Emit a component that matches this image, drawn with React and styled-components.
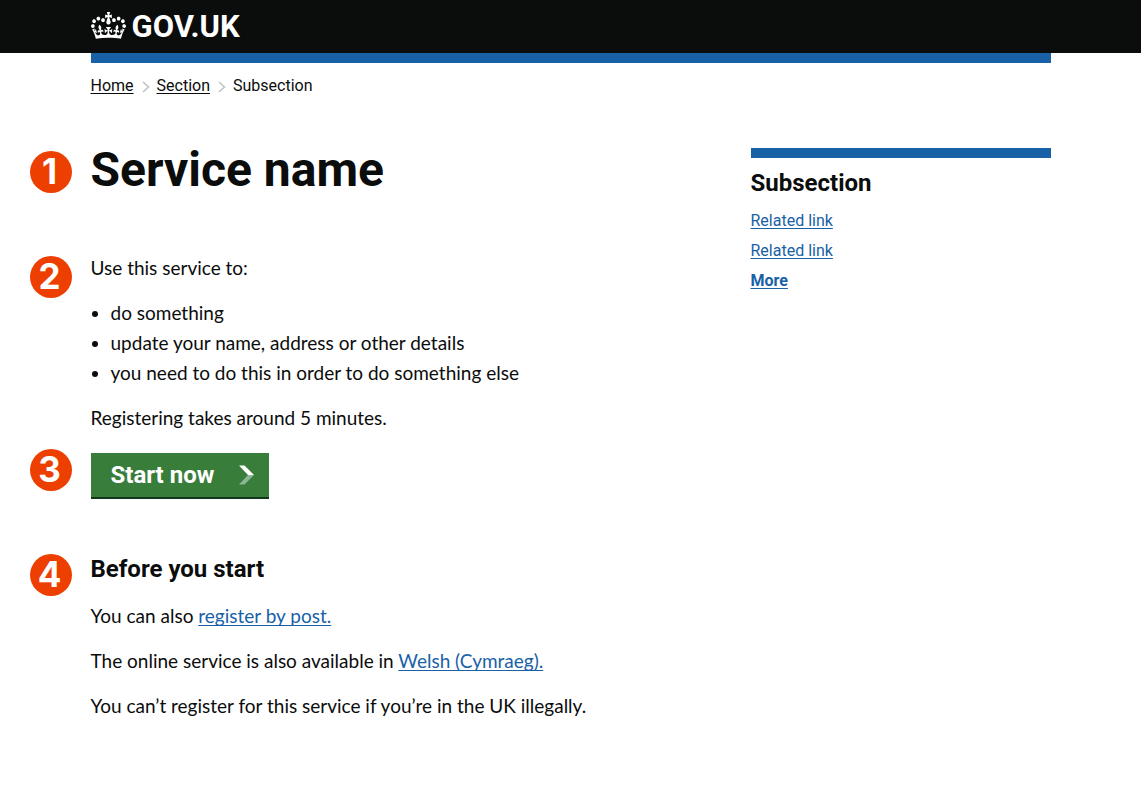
import React from "react";
import styled, { createGlobalStyle } from "styled-components";

const GlobalStyle = createGlobalStyle`
  *, *::before, *::after { box-sizing: border-box; }
  body {
    margin: 0;
    background: #fff;
    color: #0b0c0c;
    font-family: Lato, "Liberation Sans", sans-serif;
    font-size: 19px;
    line-height: 30px;
  }
  h1, h2, p, ul, ol { margin: 0; padding: 0; }
`;

const Wrap = styled.div`
  max-width: 960px;
  margin: 0 auto;
`;

const Header = styled.header`
  background: #0b0c0c;
`;

const HeaderInner = styled(Wrap)`
  height: 53px;
  display: flex;
  align-items: center;
`;

const Logo = styled.a`
  display: flex;
  align-items: center;
  gap: 6px;
  color: #fff;
  font-family: Roboto, sans-serif;
  font-size: 31px;
  font-weight: 700;
  text-decoration: none;

  svg {
    margin-bottom: 2px;
  }
`;

const Bar = styled.div`
  height: 10px;
  background: #1861a6;
`;

const Breadcrumbs = styled.ol`
  display: flex;
  align-items: center;
  padding-top: 13px;
  list-style: none;
  font-family: Roboto, sans-serif;
  font-size: 16px;
  line-height: 20px;
`;

const Crumb = styled.li`
  display: flex;
  align-items: center;
`;

const Separator = styled.svg`
  margin: 2px 7px 0 8px;
`;

const Link = styled.a`
  color: ${(p) => (p.$plain ? "#0b0c0c" : "#1861a6")};
  font-weight: ${(p) => (p.$bold ? 700 : 400)};
  text-underline-offset: 2px;
  text-decoration-thickness: 1px;
  text-decoration-skip-ink: none;
`;

const Columns = styled(Wrap)`
  display: grid;
  grid-template-columns: minmax(0, 1fr) 300px;
  gap: 30px;
  padding: 52px 0 60px;
`;

const Step = styled.section`
  display: grid;
  grid-template-columns: 42px minmax(0, 1fr);
  column-gap: 19px;
  align-items: start;
  margin-left: -61px;
  margin-top: ${(p) => p.$space}px;
`;

const Badge = styled.span`
  width: 42px;
  height: 42px;
  padding-right: 2px;
  border-radius: 50%;
  background: #ed3f00;
  color: #fff;
  font: bold 35px/40px Inter, "Liberation Sans", sans-serif;
  text-align: center;
`;

const Title = styled.h1`
  font-family: Roboto, sans-serif;
  font-size: 48px;
  line-height: 38px;
  font-weight: 700;
`;

const Heading = styled.h2`
  font-family: Roboto, sans-serif;
  font-size: 24px;
  line-height: 30px;
  font-weight: 700;
`;

const Copy = styled.div`
  display: grid;
  gap: 15px;
  margin-top: ${(p) => p.$top || 0}px;
`;

const Bullets = styled.ul`
  padding-left: 20px;
`;

const StartButton = styled.button`
  display: flex;
  align-items: center;
  gap: 24px;
  justify-self: start;
  height: 46px;
  margin-top: 4px;
  padding: 0 14px 0 20px;
  border: 0;
  border-bottom: 2px solid #12371a;
  background: #397d3b;
  color: #fff;
  font: 700 24px/30px Roboto, sans-serif;
`;

const Related = styled.aside`
  display: grid;
  align-content: start;
`;

const RelatedHeading = styled(Heading)`
  margin: 10px 0 8px;
`;

const RelatedLinks = styled.ul`
  list-style: none;
  font-family: Roboto, sans-serif;
  font-size: 16px;
`;

const Crown = () => (
  <svg width="35" height="27" viewBox="0 0 132 97" preserveAspectRatio="none" fill="#fff" aria-hidden="true">
    <path d="M25 30.2c3.5 1.5 7.7-.2 9.1-3.7 1.5-3.6-.2-7.8-3.9-9.2-3.6-1.4-7.6.3-9.1 3.9-1.4 3.5.3 7.5 3.9 9zM9 39.5c3.6 1.5 7.8-.2 9.2-3.7 1.5-3.6-.2-7.8-3.9-9.1-3.6-1.5-7.6.2-9.1 3.8-1.4 3.5.3 7.5 3.8 9zM4.4 57.2c3.5 1.5 7.7-.2 9.1-3.8 1.5-3.6-.2-7.7-3.9-9.1-3.5-1.5-7.6.3-9.1 3.8-1.4 3.5.3 7.6 3.9 9.1zm38.3-21.4c3.5 1.5 7.7-.2 9.1-3.8 1.5-3.6-.2-7.7-3.9-9.1-3.6-1.5-7.6.3-9.1 3.8-1.3 3.6.4 7.7 3.9 9.1zm64.4-5.6c-3.6 1.5-7.8-.2-9.1-3.7-1.5-3.6.2-7.8 3.8-9.2 3.6-1.4 7.7.3 9.2 3.9 1.3 3.5-.4 7.5-3.9 9zm15.9 9.3c-3.6 1.5-7.7-.2-9.1-3.7-1.5-3.6.2-7.8 3.7-9.1 3.6-1.5 7.7.2 9.2 3.8 1.5 3.5-.3 7.5-3.8 9zm4.7 17.7c-3.6 1.5-7.8-.2-9.2-3.8-1.5-3.6.2-7.7 3.9-9.1 3.6-1.5 7.7.3 9.2 3.8 1.3 3.5-.4 7.6-3.9 9.1zM89.3 35.8c-3.6 1.5-7.8-.2-9.2-3.8-1.4-3.6.2-7.7 3.9-9.1 3.6-1.5 7.7.3 9.2 3.8 1.4 3.6-.3 7.7-3.9 9.1zM69.7 17.7l8.9 4.7V9.3l-8.9 2.8c-.2-.3-.5-.6-.9-.9L72.4 0H59.6l3.5 11.2c-.3.3-.6.5-.9.9l-8.8-2.8v13.1l8.8-4.7c.3.3.6.7.9.9l-5 15.4v.1c-.2.8-.4 1.6-.4 2.4 0 4.1 3.1 7.5 7 8.1h.2c.3 0 .7.1 1 .1.4 0 .7 0 1-.1h.2c4-.6 7.1-4.1 7.1-8.1 0-.8-.1-1.7-.4-2.4V34l-5.1-15.4c.4-.2.7-.6 1-.9zM66 92.8c16.9 0 32.8 1.1 47.1 3.2 4-16.9 8.9-26.7 14-33.5l-9.6-3.4c1 4.9 1.1 7.2 0 10.2-1.5-1.4-3-4.3-4.2-8.7L108.6 76c2.8-2 5-3.2 7.5-3.3-4.4 9.4-10 11.9-13.6 11.2-4.3-.8-6.3-4.6-5.6-7.9 1-4.7 5.7-5.9 8-.5 4.3-8.7-3-11.4-7.6-8.8 7.1-7.2 7.9-13.5 2.1-21.1-8 6.1-8.1 12.3-4.5 20.8-4.7-5.4-12.1-2.5-9.5 6.2 3.4-5.2 7.9-2 7.2 3.1-.6 4.3-6.4 7.8-13.5 7.2-10.3-.9-10.9-8-11.2-13.8 2.5-.5 7.1 1.8 11 7.3L80.2 60c-4.1 4.4-8 5.3-12.3 5.4 1.4-4.4 8-11.6 8-11.6H55.5s6.4 7.2 7.9 11.6c-4.2-.1-8-1-12.3-5.4l1.4 16.4c3.9-5.5 8.5-7.7 10.9-7.3-.3 5.8-.9 12.8-11.1 13.8-7.2.6-12.9-2.9-13.5-7.2-.7-5 3.8-8.3 7.1-3.1 2.7-8.7-4.6-11.6-9.4-6.2 3.7-8.5 3.6-14.7-4.6-20.8-5.8 7.6-5 13.9 2.2 21.1-4.7-2.6-11.9.1-7.7 8.8 2.3-5.5 7.1-4.2 8.1.5.7 3.3-1.3 7.1-5.7 7.9-3.5.7-9-1.8-13.5-11.2 2.5.1 4.7 1.3 7.5 3.3l-4.7-15.4c-1.2 4.4-2.7 7.2-4.3 8.7-1.1-3-.9-5.3 0-10.2l-9.5 3.4c5 6.9 9.9 16.7 14 33.5 14.8-2.1 30.8-3.2 47.7-3.2z" />
  </svg>
);

const CrumbArrow = () => (
  <Separator width="8" height="12" viewBox="0 0 8 12" fill="none" stroke="#bfc1c3" strokeWidth="1.5" aria-hidden="true">
    <path d="M1 1l5.5 5L1 11" />
  </Separator>
);

const StartArrow = () => (
  <svg width="17" height="20" viewBox="0 0 17 20" aria-hidden="true">
    <path d="M1 .5h5.5L16 10h-6z" fill="#fff" />
    <path d="M10 10h6l-9.500 9.500H1z" fill="#8bb695" />
  </svg>
);

export default function App() {
  return (
    <>
      <GlobalStyle />
      <Header>
        <HeaderInner>
          <Logo href="#">
            <Crown />
            GOV.UK
          </Logo>
        </HeaderInner>
      </Header>
      <Wrap>
        <Bar />
        <nav aria-label="Breadcrumb">
          <Breadcrumbs>
            <Crumb><Link $plain href="#">Home</Link><CrumbArrow /></Crumb>
            <Crumb><Link $plain href="#">Section</Link><CrumbArrow /></Crumb>
            <Crumb>Subsection</Crumb>
          </Breadcrumbs>
        </nav>
      </Wrap>
      <Columns>
        <main>
          <Step $space={3}>
            <Badge>1</Badge>
            <Title>Service name</Title>
          </Step>
          <Step $space={63}>
            <Badge>2</Badge>
            <Copy $top={-3}>
              <p>Use this service to:</p>
              <Bullets>
                <li>do something</li>
                <li>update your name, address or other details</li>
                <li>you need to do this in order to do something else</li>
              </Bullets>
              <p>Registering takes around 5 minutes.</p>
            </Copy>
          </Step>
          <Step $space={16}>
            <Badge>3</Badge>
            <StartButton type="button">
              Start now
              <StartArrow />
            </StartButton>
          </Step>
          <Step $space={55}>
            <Badge>4</Badge>
            <div>
              <Heading>Before you start</Heading>
              <Copy $top={17}>
                <p>You can also <Link href="#">register by post.</Link></p>
                <p>The online service is also available in <Link href="#">Welsh (Cymraeg).</Link></p>
                <p>You can’t register for this service if you’re in the UK illegally.</p>
              </Copy>
            </div>
          </Step>
        </main>
        <Related>
          <Bar />
          <RelatedHeading>Subsection</RelatedHeading>
          <RelatedLinks>
            <li><Link href="#">Related link</Link></li>
            <li><Link href="#">Related link</Link></li>
            <li><Link $bold href="#">More</Link></li>
          </RelatedLinks>
        </Related>
      </Columns>
    </>
  );
}
